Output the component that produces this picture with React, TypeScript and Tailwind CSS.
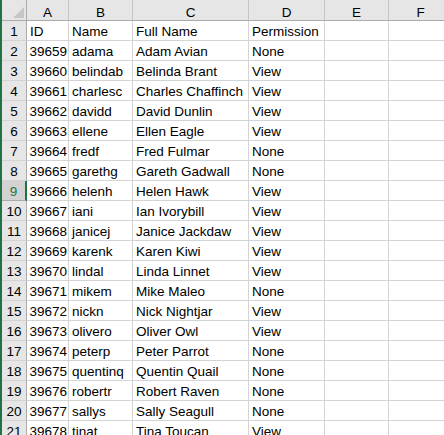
const rows: [string, string, string, string][] = [
  ["ID", "Name", "Full Name", "Permission"],
  ["39659", "adama", "Adam Avian", "None"],
  ["39660", "belindab", "Belinda Brant", "View"],
  ["39661", "charlesc", "Charles Chaffinch", "View"],
  ["39662", "davidd", "David Dunlin", "View"],
  ["39663", "ellene", "Ellen Eagle", "View"],
  ["39664", "fredf", "Fred Fulmar", "None"],
  ["39665", "garethg", "Gareth Gadwall", "None"],
  ["39666", "helenh", "Helen Hawk", "View"],
  ["39667", "iani", "Ian Ivorybill", "View"],
  ["39668", "janicej", "Janice Jackdaw", "View"],
  ["39669", "karenk", "Karen Kiwi", "View"],
  ["39670", "lindal", "Linda Linnet", "View"],
  ["39671", "mikem", "Mike Maleo", "None"],
  ["39672", "nickn", "Nick Nightjar", "View"],
  ["39673", "olivero", "Oliver Owl", "View"],
  ["39674", "peterp", "Peter Parrot", "None"],
  ["39675", "quentinq", "Quentin Quail", "None"],
  ["39676", "robertr", "Robert Raven", "None"],
  ["39677", "sallys", "Sally Seagull", "None"],
  ["39678", "tinat", "Tina Toucan", "View"],
];

const cols = ["A", "B", "C", "D", "E", "F"];
const gridCols = "grid grid-cols-[25px_42px_64px_116px_76px_64px_64px]";

export default function App() {
  return (
    <div className="h-[435px] w-[444px] overflow-hidden bg-white font-['Liberation_Sans',Arial,sans-serif] text-[13.5px] text-black">
      <div className="flex">
        <div className="w-[2px] shrink-0 bg-[#217346]" />
        <div className={gridCols}>
          {/* header row */}
          <div className="flex h-[21px] items-end justify-end border-r border-b border-[#ababab] bg-[#e6e6e6] pr-[2px] pb-[2px]">
            <svg width="11" height="11" viewBox="0 0 11 11">
              <polygon points="11,0 11,11 0,11" fill="#c6c6c6" />
            </svg>
          </div>
          {cols.map((c) => (
            <div
              key={c}
              className="flex h-[21px] items-end justify-center border-r border-b border-r-[#c6c6c6] border-b-[#ababab] bg-[#e6e6e6] pb-[1px] leading-none"
            >
              {c}
            </div>
          ))}

          {rows.map((r, i) => {
            const n = i + 1;
            const selected = n === 9;
            return [
              <div
                key={`h${n}`}
                className={
                  selected
                    ? "flex h-[20px] items-end justify-center border-b border-[#ababab] border-r-2 border-r-[#217346] bg-[#d2d2d2] pb-[2px] leading-none text-[#217346]"
                    : "flex h-[20px] items-end justify-center border-r border-b border-[#ababab] border-b-[#d4d4d4] bg-[#e6e6e6] pb-[2px] leading-none"
                }
              >
                {n}
              </div>,
              <div
                key={`a${n}`}
                className={`flex h-[20px] items-end border-r border-b border-[#d4d4d4] pb-[2px] leading-none whitespace-nowrap ${
                  i === 0 ? "justify-start pl-[3px]" : "justify-end pr-[1px]"
                }`}
              >
                {r[0]}
              </div>,
              ...r.slice(1).map((v, j) => (
                <div
                  key={`c${n}-${j}`}
                  className="flex h-[20px] items-end overflow-visible border-r border-b border-[#d4d4d4] pb-[2px] pl-[3px] leading-none whitespace-nowrap"
                >
                  {v}
                </div>
              )),
              <div key={`e${n}`} className="h-[20px] border-r border-b border-[#d4d4d4]" />,
              <div key={`f${n}`} className="h-[20px] border-r border-b border-[#d4d4d4]" />,
            ];
          })}
        </div>
      </div>
    </div>
  );
}
